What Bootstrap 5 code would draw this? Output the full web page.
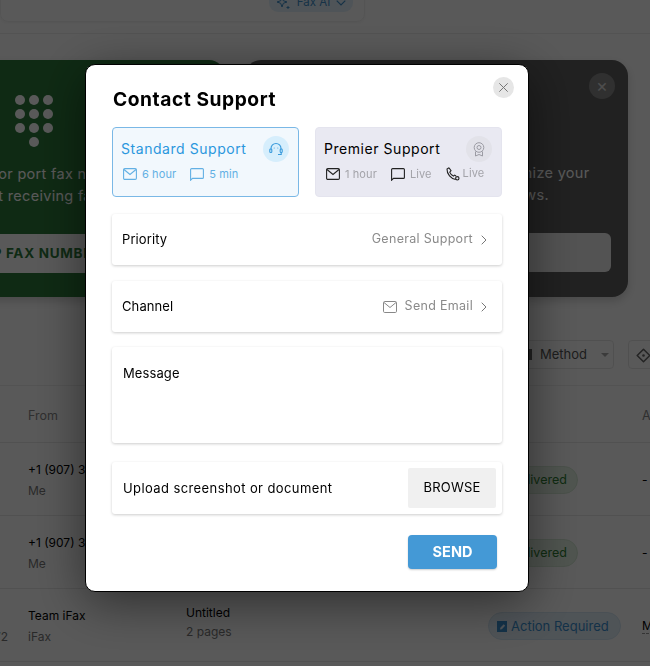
<!DOCTYPE html>
<html lang="en">
<head>
    <meta charset="UTF-8">
    <meta name="viewport" content="width=device-width, initial-scale=1.0">
    <title>Contact Support</title>
    <link href="https://cdn.jsdelivr.net/npm/bootstrap@5.3.0/dist/css/bootstrap.min.css" rel="stylesheet">
    <style>
        html, body { height: 666px; overflow: hidden; }
        body { font-family: "Inter", "Liberation Sans", sans-serif; background: #fff; color: #000; }

        /* page behind the dialog */
        .page-top { height: 35px; border-bottom: 1px solid #eee; }
        .top-tabs { width: 365px; height: 23px; margin-top: -1px; border: 1px solid #f1f1f1; border-radius: 0 0 8px 8px; box-shadow: 0 1px 3px rgba(0,0,0,.05); }
        .ai-chip { width: 84px; height: 15px; margin-left: 268px; background: #e3f1fb; color: #3f8fcb; border-radius: 0 0 9px 9px; font-size: 11.5px; }
        .ai-chip-in { height: 12px; margin-top: -3px; gap: 6px; }
        .banner-row { height: 237px; margin-top: 26px; margin-left: -170px; }
        .promo { height: 237px; border-radius: 16px; flex: none; font-size: 14.5px; line-height: 22px; letter-spacing: .3px; box-shadow: 0 4px 10px rgba(0,0,0,.18); }
        .promo-green { width: 395px; background: #2c7a3a; color: #fff; padding: 35px 0 0 185px; }
        .promo-dark { width: 383px; margin-left: 20px; background: #5f5f5f; color: #fff; padding: 102px 17px 0 17px; }
        .dial { width: 38px; display: grid; grid-template-columns: repeat(3, 10px); gap: 4px; margin-bottom: 16px; }
        .dial i { width: 10px; height: 10px; border-radius: 50%; background: #fff; }
        .dial i:last-child { grid-column: 2; }
        .promo-text { margin-left: -46px; white-space: nowrap; }
        .promo-text.line-two { margin-left: -75px; }
        .promo-btn { height: 39px; margin-top: 27px; border-radius: 6px; background: #fff; color: #2c7a3a; font-weight: 700; font-size: 13.5px; line-height: 39px; white-space: nowrap; letter-spacing: .7px; }
        .promo-green .promo-btn { width: 320px; margin-left: -185px; padding-left: 120px; }
        .promo-dark .promo-btn { background: #eee; }
        .promo-dark .promo-text { margin-left: 216px; }
        .promo-dark .promo-text.line-two { margin-left: 209px; }
        .promo-x { width: 26px; height: 26px; margin: -89px -4px 63px auto; border-radius: 50%; background: #8a8a8a; color: #ddd; font-size: 18px; line-height: 25px; text-align: center; letter-spacing: 0; }
        .filter-row { height: 29px; margin-top: 43px; padding-left: 520px; }
        .filter-btn { flex: none; height: 29px; width: 94px; border: 1px solid #e6e6e6; border-radius: 4px; font-size: 13px; line-height: 27px; color: #555; padding-left: 2px; }
        .filter-btn + .filter-btn { width: 60px; margin-left: 14px; padding-left: 7px; }
        .method-ic { display: inline-block; width: 9px; height: 11px; margin-right: 8px; background: #666; vertical-align: -1px; }
        .down-caret { display: inline-block; margin-left: 14px; border: 4px solid transparent; border-top-color: #aaa; border-bottom: 0; vertical-align: 2px; }
        .fax-table { width: 720px; margin-top: 16px; table-layout: fixed; font-size: 12px; border-top: 1px solid #eee; }
        .fax-table td, .fax-table th { padding: 2px 0 0; border-bottom: 1px solid #e8e8e8; vertical-align: middle; font-weight: 400; }
        .fax-table tr { height: 73px; }
        .fax-table tr.head-row { height: 57px; color: #888; font-size: 12.5px; }
        .fax-table tr.head-row th { padding-top: 4px; }
        .fax-table td > div + div { margin-top: 3px; color: #777; }
        .fax-table td.doc-cell > div:last-child { margin-top: 1px; margin-bottom: 8px; }
        .row-no { margin-left: -6px; white-space: nowrap; }
        .pill { display: block; position: relative; height: 28px; width: 133px; line-height: 26px; border-radius: 14px; font-size: 13px; white-space: nowrap; padding-left: 22px; }
        .pill-ok { width: 90px; background: #e4f2e4; border: 1px solid #d5e8d5; color: #2e7d32; font-size: 12.5px; padding-left: 22px; }
        .pill-act { background: #e3f0fa; border: 1px solid #d4e6f4; color: #3a8fd0; }
        .clip-ic { width: 12px; height: 13px; position: absolute; left: 7px; top: 7px; fill: #3a8fd0; }
        .dash-m { color: #000; border-bottom: 1px dashed #999; }

        /* dialog */
        .dim-layer { position: fixed; inset: 0; background: rgba(0,0,0,.65); }
        .support-dlg { position: fixed; top: 64px; left: 85px; width: 444px; height: 528px; background: #fff; border: 1px solid #000; border-radius: 10px; padding: 22px 26px 0 26px; box-shadow: 0 10px 50px rgba(0,0,0,.5); letter-spacing: .1px; }
        .dlg-title { font-size: 19.2px; line-height: 24px; font-weight: 700; margin: 0 0 16px 1px; letter-spacing: .55px; }
        .dlg-close { position: absolute; top: 12px; right: 14px; width: 21px; height: 21px; padding: 6px; border: 0; border-radius: 50%; background: #e6e6e6; display: flex; }
        .plan { width: 187px; height: 70px; border-radius: 4px; padding: 12px 8px 0; position: relative; }
        .plan-std { margin-right: 16px; background: #f2f8fd; border: 1px solid #7ab8e6; color: #2b97dd; }
        .plan-pre { background: #e9e9f2; border: 1px solid #e4e4ee; color: #000; }
        .plan-name { font-size: 14px; line-height: 18px; letter-spacing: .55px; white-space: nowrap; }
        .plan-ic { position: absolute; top: 8px; right: 9px; width: 26px; height: 26px; border-radius: 50%; display: flex; align-items: center; justify-content: center; }
        .plan-std .plan-ic { background: #d6eefc; }
        .plan-pre .plan-ic { background: #e2e2e9; }
        .plan-meta { margin-top: 8px; height: 16px; padding-left: 2px; font-size: 11px; line-height: 16px; letter-spacing: .1px; white-space: nowrap; color: #63b0e4; }
        .plan-pre .plan-meta { color: #a3a3a9; }
        .plan-meta svg { flex: none; margin-right: 5px; }
        .plan-meta span { margin-right: 14px; }
        .plan-meta svg.ph-ic { margin-right: 3px; }
        .plan-meta span.up-1 { margin-top: -2px; margin-right: 0; }
        .field-box { width: 390px; background: #fff; border-radius: 3px; box-shadow: 0 1px 3px rgba(0,0,0,.2); font-size: 13px; padding: 0 15px 0 10px; }
        .field-one { height: 51px; margin-top: 17px; }
        .field-one + .field-one { margin-top: 16px; }
        .field-val { color: #8a8a8a; font-size: 12.5px; letter-spacing: .3px; }
        .field-msg { height: 96px; margin-top: 15px; padding-top: 17px; padding-left: 11px; line-height: 18px; }
        .field-up { height: 52px; margin-top: 19px; padding-right: 6px; padding-left: 11px; letter-spacing: .4px; }
        .field-up span { margin-top: 2px; }
        .browse-btn { width: 88px; height: 40px; border: 0; border-radius: 2px; background: #f0f0f0; color: #000; font-size: 13px; letter-spacing: .2px; }
        .send-btn { display: block; width: 89px; height: 34px; margin: 21px 5px 0 auto; padding: 0; border: 0; border-radius: 4px; background: #4499d6; color: #fff; font-size: 14.5px; font-weight: 700; box-shadow: 0 1px 2px rgba(0,0,0,.2); }
    </style>
</head>
<body>
    <!-- page behind -->
    <div class="page-top">
        <div class="top-tabs">
            <div class="ai-chip">
                <div class="ai-chip-in d-flex align-items-center justify-content-center">
                    <svg width="15" height="14" viewBox="0 0 15 14" fill="none" stroke="#3f8fcb" stroke-width="1"><path d="M6 1l1.300 3.700L11 6 7.300 7.300 6 11 4.700 7.300 1 6l3.700-1.300z"/><path d="M12 10v3M10.500 11.500h3"/></svg>
                    <span>Fax AI</span>
                    <svg width="10" height="6" viewBox="0 0 10 6" fill="none" stroke="#3f8fcb" stroke-width="1.200"><path d="M.7.700L5 5 9.300.7"/></svg>
                </div>
            </div>
        </div>
    </div>
    <div class="banner-row d-flex">
        <div class="promo promo-green">
            <div class="dial"><i></i><i></i><i></i><i></i><i></i><i></i><i></i><i></i><i></i><i></i></div>
            <div class="promo-text">Get or port fax numbers</div>
            <div class="promo-text line-two">and start receiving faxes</div>
            <div class="promo-btn">SET UP FAX NUMBER</div>
        </div>
        <div class="promo promo-dark">
            <div class="promo-x">&times;</div>
            <div class="promo-text">Customize your</div>
            <div class="promo-text line-two">workflows.</div>
            <div class="promo-btn"></div>
        </div>
    </div>
    <div class="filter-row d-flex">
        <div class="filter-btn"><span class="method-ic"></span>Method<span class="down-caret"></span></div>
        <div class="filter-btn"><svg width="15" height="15" viewBox="0 0 15 15" fill="none" stroke="#666" stroke-width="1.500"><path d="M7.500 1.200l6.300 6.300-6.300 6.300-6.300-6.300z" stroke-linejoin="round"/><circle cx="7.500" cy="7.500" r="1.300" fill="#666" stroke="none"/></svg></div>
    </div>
    <table class="fax-table">
        <colgroup><col style="width:28px"><col style="width:158px"><col style="width:302px"><col style="width:154px"><col></colgroup>
        <tr class="head-row"><th></th><th>From</th><th></th><th></th><th>A</th></tr>
        <tr><td></td><td><div>+1 (907) 313</div><div>Me</div></td><td></td><td><span class="pill pill-ok">Delivered</span></td><td>-</td></tr>
        <tr><td></td><td><div>+1 (907) 313</div><div>Me</div></td><td></td><td><span class="pill pill-ok">Delivered</span></td><td>-</td></tr>
        <tr><td><div>&nbsp;</div><div class="row-no">72</div></td><td><div>Team iFax</div><div>iFax</div></td><td class="doc-cell"><div>Untitled</div><div>2 pages</div></td><td><span class="pill pill-act"><svg class="clip-ic" viewBox="0 0 12 13"><path d="M1 1h10v11H1zM4 9.500l.3-1.800 3.400-3.400 1.500 1.500-3.400 3.400z" fill-rule="evenodd"/></svg>Action Required</span></td><td><span class="dash-m">M</span></td></tr>
    </table>

    <!-- dialog -->
    <div class="dim-layer"></div>
    <div class="support-dlg">
        <button class="dlg-close" type="button" aria-label="Close">
            <svg width="9" height="9" viewBox="0 0 9 9" fill="none" stroke="#777" stroke-width="1"><path d="M.3.300l8.400 8.400M8.700.300L.3 8.700"/></svg>
        </button>
        <h5 class="dlg-title">Contact Support</h5>
        <div class="d-flex">
            <div class="plan plan-std">
                <div class="plan-name">Standard Support</div>
                <div class="plan-ic">
                    <svg width="14" height="14" viewBox="0 0 14 14" fill="none" stroke="#3a9bdc" stroke-width="1.100"><path d="M2 7.500V6.500a5 5 0 0 1 10 0v1"/><rect x=".8" y="7" width="2" height="3.500" rx=".8"/><rect x="11.200" y="7" width="2" height="3.500" rx=".8"/><path d="M12.200 10.500v2H9"/><circle cx="5.200" cy="6" r=".5" fill="#3a9bdc" stroke="none"/><circle cx="8.800" cy="6" r=".5" fill="#3a9bdc" stroke="none"/></svg>
                </div>
                <div class="plan-meta d-flex align-items-center">
                    <svg width="14" height="12" viewBox="0 0 14 12" fill="none" stroke="#63b0e4" stroke-width="1.100"><rect x=".6" y=".6" width="12.800" height="10.800" rx="1.200"/><path d="M1 1.500l6 5 6-5"/></svg><span>6 hour</span>
                    <svg width="14" height="13" viewBox="0 0 14 13" fill="none" stroke="#63b0e4" stroke-width="1.100"><path d="M.6 12.200V1.600a1 1 0 0 1 1-1h10.800a1 1 0 0 1 1 1v7.800a1 1 0 0 1-1 1H2.500z"/></svg><span>5 min</span>
                </div>
            </div>
            <div class="plan plan-pre">
                <div class="plan-name">Premier Support</div>
                <div class="plan-ic">
                    <svg width="12" height="15" viewBox="0 0 12 15" fill="none" stroke="#9b9ba3" stroke-width="1"><circle cx="6" cy="5.500" r="4.800"/><circle cx="6" cy="5.500" r="2"/><path d="M2.500 9.500V14L6 12.500 9.500 14V9.500"/></svg>
                </div>
                <div class="plan-meta d-flex align-items-center">
                    <svg width="14" height="12" viewBox="0 0 14 12" fill="none" stroke="#222" stroke-width="1.100"><rect x=".6" y=".6" width="12.800" height="10.800" rx="1.200"/><path d="M1 1.500l6 5 6-5"/></svg><span>1 hour</span>
                    <svg width="14" height="13" viewBox="0 0 14 13" fill="none" stroke="#222" stroke-width="1.100"><path d="M.6 12.200V1.600a1 1 0 0 1 1-1h10.800a1 1 0 0 1 1 1v7.800a1 1 0 0 1-1 1H2.500z"/></svg><span>Live</span>
                    <svg class="ph-ic" width="14" height="14" viewBox="0 0 14 14" fill="none" stroke="#222" stroke-width="1.100"><path d="M3 .8L1 2c-.2 5 4 10 8.700 10.500"/><path d="M3 .8l2 3-1.300 1.300c.7 1.700 2 3.200 3.700 4l1.200-1 1.500.8"/><circle cx="11.300" cy="11.300" r="1.700"/></svg><span class="up-1">Live</span>
                </div>
            </div>
        </div>
        <div class="field-box field-one d-flex align-items-center justify-content-between">
            <span>Priority</span>
            <span class="field-val d-flex align-items-center gap-2">General Support
                <svg width="6" height="10" viewBox="0 0 6 10" fill="none" stroke="#777" stroke-width="1"><path d="M.7.700L5 5 .7 9.300"/></svg></span>
        </div>
        <div class="field-box field-one d-flex align-items-center justify-content-between">
            <span>Channel</span>
            <span class="field-val d-flex align-items-center gap-2">
                <svg width="14" height="12" viewBox="0 0 14 12" fill="none" stroke="#888" stroke-width="1"><rect x=".5" y=".5" width="13" height="11" rx="1.200"/><path d="M1 1.500l6 5 6-5"/></svg>Send Email
                <svg width="6" height="10" viewBox="0 0 6 10" fill="none" stroke="#777" stroke-width="1"><path d="M.7.700L5 5 .7 9.300"/></svg></span>
        </div>
        <div class="field-box field-msg">Message</div>
        <div class="field-box field-up d-flex align-items-center justify-content-between">
            <span>Upload screenshot or document</span>
            <button class="browse-btn" type="button">BROWSE</button>
        </div>
        <button class="send-btn" type="button">SEND</button>
    </div>

    <script src="https://cdn.jsdelivr.net/npm/bootstrap@5.3.0/dist/js/bootstrap.bundle.min.js"></script>
</body>
</html>
